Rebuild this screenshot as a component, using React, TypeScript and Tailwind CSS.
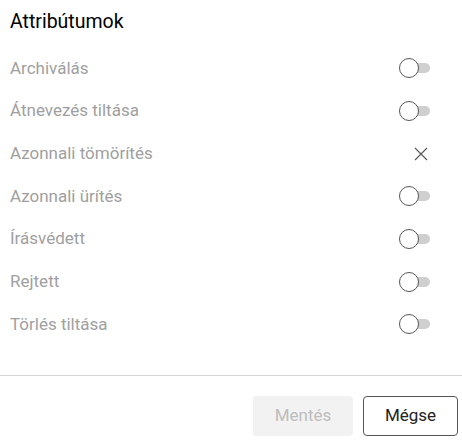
import React from "react";

const rows: { label: string; kind: "toggle" | "x" }[] = [
  { label: "Archiválás", kind: "toggle" },
  { label: "Átnevezés tiltása", kind: "toggle" },
  { label: "Azonnali tömörítés", kind: "x" },
  { label: "Azonnali ürítés", kind: "toggle" },
  { label: "Írásvédett", kind: "toggle" },
  { label: "Rejtett", kind: "toggle" },
  { label: "Törlés tiltása", kind: "toggle" },
];

function Toggle() {
  return (
    <div className="relative w-[31px] h-[20px]">
      <div className="absolute left-[4px] top-[5px] w-[27px] h-[10px] rounded-full bg-[#cfcfcf]" />
      <div className="absolute left-0 top-0 w-[20px] h-[20px] rounded-full bg-white border border-[#555]" />
    </div>
  );
}

function XIcon() {
  return (
    <div className="w-[31px] h-[20px] flex items-center justify-end pr-[2px]">
      <svg width="14" height="14" viewBox="0 0 14 14" fill="none">
        <path d="M1 1L13 13M13 1L1 13" stroke="#555" strokeWidth="1.1" />
      </svg>
    </div>
  );
}

export default function App() {
  return (
    <div
      className="w-[462px] h-[440px] bg-white flex flex-col"
      style={{ fontFamily: "Roboto, 'Liberation Sans', sans-serif" }}
    >
      <div className="pt-[10px] pl-[10px] h-[47px]">
        <div className="text-[19.5px] leading-[24px] font-normal text-[#000]">Attribútumok</div>
      </div>
      <div className="flex flex-col">
        {rows.map((r) => (
          <div key={r.label} className="h-[42.67px] flex items-center justify-between pl-[10px] pr-[32px]">
            <span className="text-[17px] font-normal text-[#a0a0a0]">{r.label}</span>
            {r.kind === "toggle" ? <Toggle /> : <XIcon />}
          </div>
        ))}
      </div>
      <div className="mt-[29px] h-px bg-[#d6d6d6]" />
      <div className="flex justify-end gap-[10px] pt-[20px] pr-[4px]">
        <button className="w-[100px] h-[40px] rounded-[4px] bg-[#f2f2f2] text-[17px] font-normal text-[#bdbdbd]">
          Mentés
        </button>
        <button className="w-[95px] h-[40px] rounded-[4px] border border-[#555] bg-white text-[17px] font-normal text-[#222]">
          Mégse
        </button>
      </div>
    </div>
  );
}
